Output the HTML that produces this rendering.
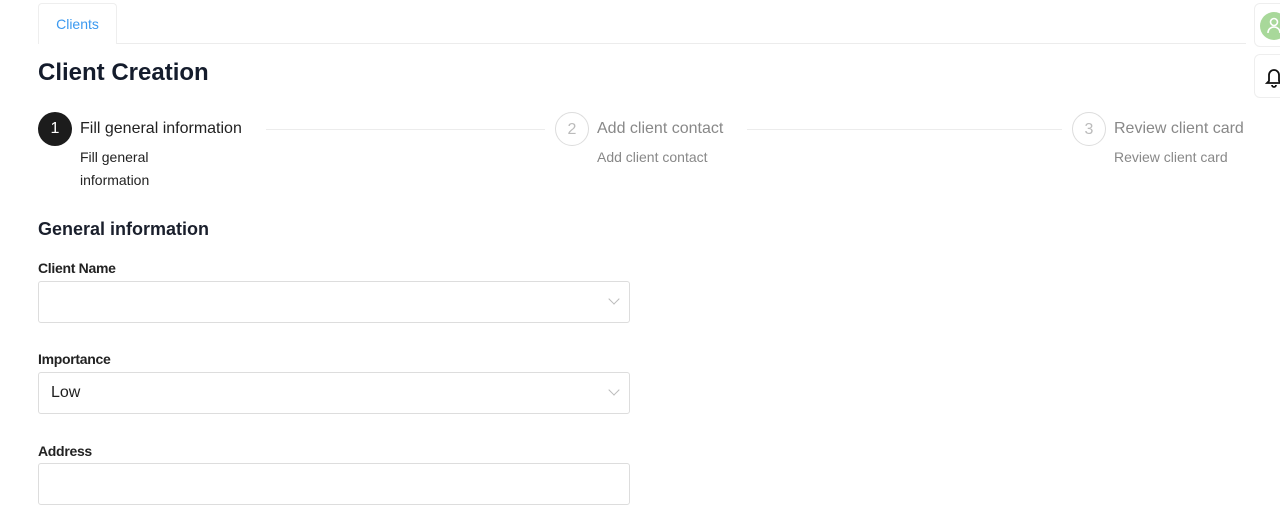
<!DOCTYPE html>
<html><head><meta charset="utf-8"><style>
*{box-sizing:border-box;margin:0;padding:0}
body{width:1280px;height:527px;overflow:hidden;background:#fff;font-family:"Liberation Sans",sans-serif;position:relative;color:#1f1f1f}
.a{position:absolute;white-space:nowrap}
.tab{left:38px;top:3px;width:79px;height:41px;border:1px solid #eee;border-bottom:none;border-radius:4px 4px 0 0;color:#3b99f0;font-size:14px;text-align:center;line-height:40px;background:#fff}
.line{height:1px;background:#ececec}
.circ{width:34px;height:34px;border-radius:50%;text-align:center;line-height:33px;font-size:16px}
.inp{left:38px;width:592px;height:42px;border:1px solid #ddd;border-radius:3px}
.chev{position:absolute;right:11px;top:13px;width:8px;height:8px;border-right:1px solid #bbb;border-bottom:1px solid #bbb;transform:rotate(45deg)}
.lbl{font-size:14px;font-weight:bold;color:#222;left:38px;letter-spacing:-0.3px}
</style></head><body>
<div class="a line" style="left:38px;top:43px;width:1208px"></div>
<div class="a tab">Clients</div>
<div class="a" style="left:38px;top:59px;font-size:24px;font-weight:bold;color:#141c2c">Client Creation</div>

<div class="a circ" style="left:38px;top:112px;background:#1c1c1c;color:#fff">1</div>
<div class="a" style="left:80px;top:120px;font-size:16px;color:#222">Fill general information</div>
<div class="a" style="left:80px;top:146px;font-size:14px;line-height:23px;color:#222">Fill general<br>information</div>
<div class="a line" style="left:266px;top:129px;width:279px"></div>

<div class="a circ" style="left:555px;top:112px;border:1px solid #ddd;color:#bbb">2</div>
<div class="a" style="left:597px;top:120px;font-size:16px;color:#888">Add client contact</div>
<div class="a" style="left:597px;top:149px;font-size:14px;color:#888">Add client contact</div>
<div class="a line" style="left:747px;top:129px;width:315px"></div>

<div class="a circ" style="left:1072px;top:112px;border:1px solid #ddd;color:#bbb">3</div>
<div class="a" style="left:1114px;top:120px;font-size:16px;color:#888">Review client card</div>
<div class="a" style="left:1114px;top:149px;font-size:14px;color:#888">Review client card</div>

<div class="a" style="left:1254px;top:3px;width:40px;height:44px;border:1px solid #eee;border-radius:6px"><div style="position:absolute;left:5px;top:8px;width:28px;height:28px;border-radius:50%;background:#a8d89a"></div>
<svg style="position:absolute;left:12px;top:13px" width="14" height="18" viewBox="0 0 14 18" fill="none" stroke="#fff" stroke-width="1.6"><circle cx="7" cy="5" r="3.5"/><path d="M1 16c0-4 3-6 6-6s6 2 6 6"/></svg></div>
<div class="a" style="left:1254px;top:54px;width:40px;height:44px;border:1px solid #eee;border-radius:6px">
<svg style="position:absolute;left:10px;top:11px" width="18" height="22" viewBox="0 0 18 22" fill="none" stroke="#111" stroke-width="1.8"><path d="M4 15V9a5 5 0 0 1 10 0v6l2 2H2z"/><path d="M7 19a2 2 0 0 0 4 0"/></svg></div>

<div class="a" style="left:38px;top:219px;font-size:18px;font-weight:bold;color:#1a1f2c">General information</div>
<div class="a lbl" style="top:260px">Client Name</div>
<div class="a inp" style="top:281px"><div class="chev"></div></div>
<div class="a lbl" style="top:351px">Importance</div>
<div class="a inp" style="top:372px"><span style="position:absolute;left:12px;top:11px;font-size:16px">Low</span><div class="chev"></div></div>
<div class="a lbl" style="top:443px">Address</div>
<div class="a inp" style="top:463px"></div>
</body></html>
